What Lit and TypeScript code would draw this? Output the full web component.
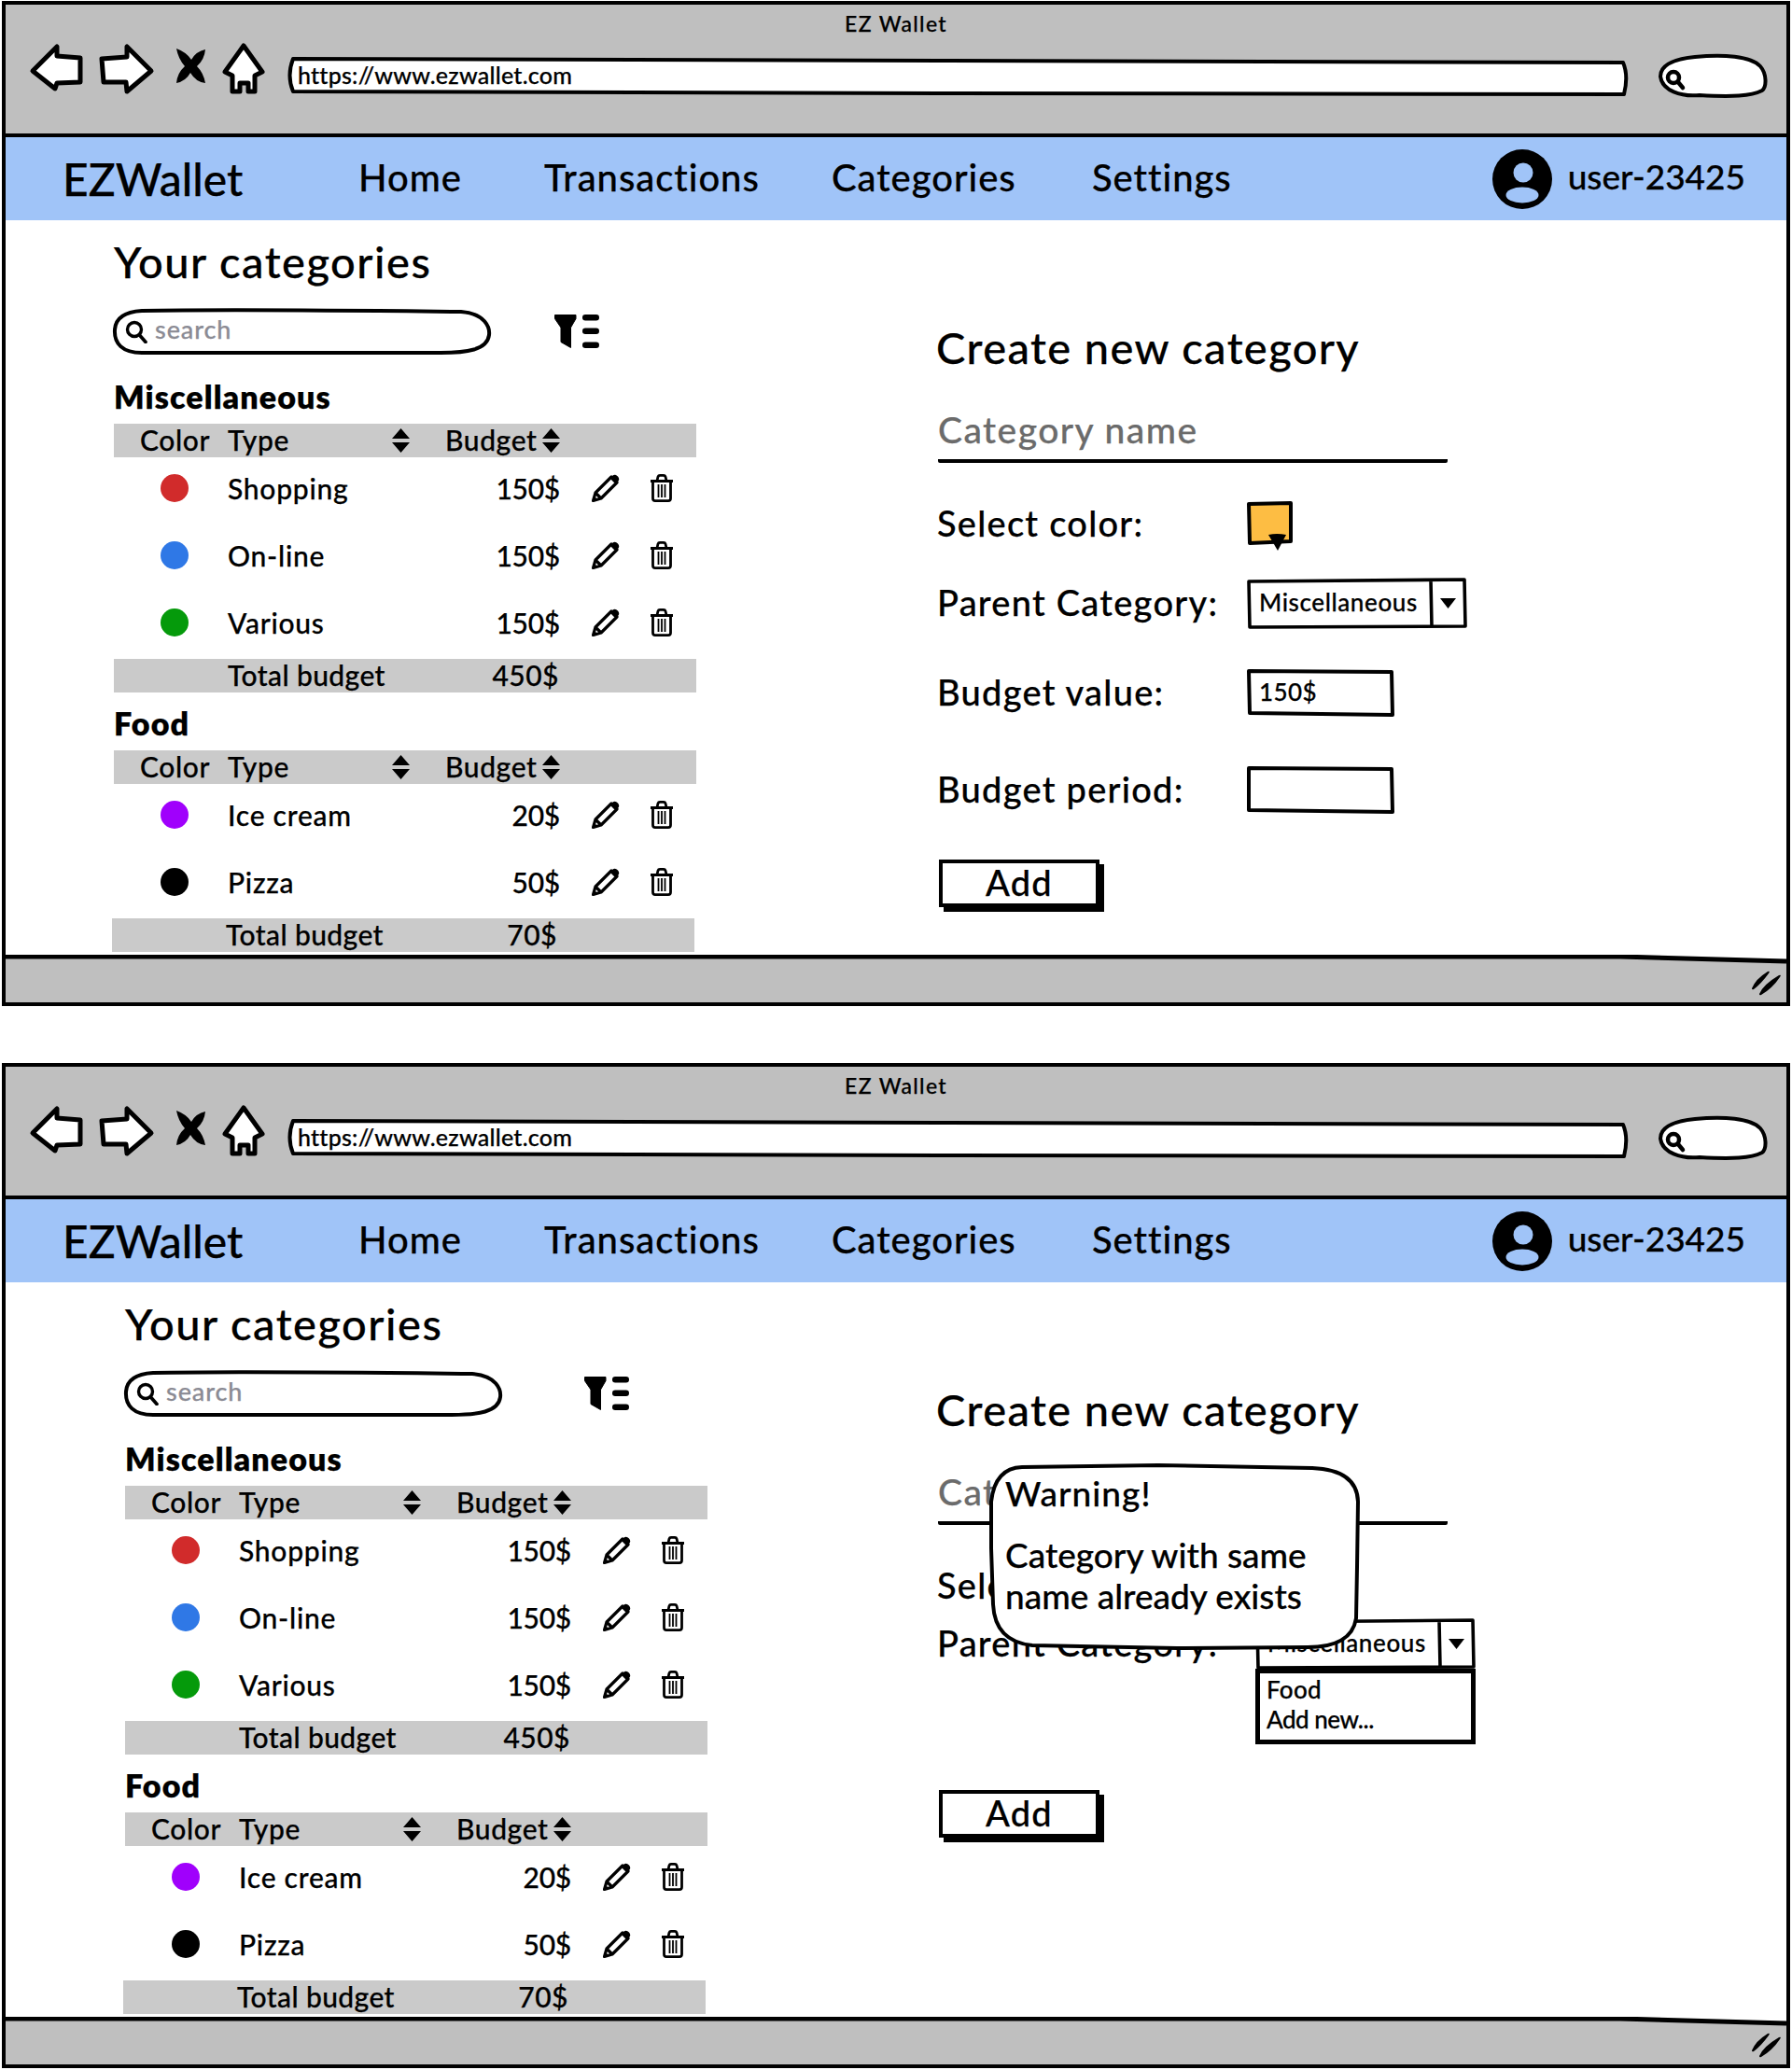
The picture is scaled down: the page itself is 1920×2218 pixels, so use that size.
import { LitElement, html, css } from 'lit';
import { customElement, property } from 'lit/decorators.js';

type Row = { color: string; type: string; budget: string };
type Group = { name: string; total: string; rows: Row[] };

const GROUPS: Group[] = [
  {
    name: 'Miscellaneous',
    total: '450$',
    rows: [
      { color: '#d12b2b', type: 'Shopping', budget: '150$' },
      { color: '#2f78e6', type: 'On-line', budget: '150$' },
      { color: '#059a0b', type: 'Various', budget: '150$' },
    ],
  },
  {
    name: 'Food',
    total: '70$',
    rows: [
      { color: '#a000fc', type: 'Ice cream', budget: '20$' },
      { color: '#000000', type: 'Pizza', budget: '50$' },
    ],
  },
];

const sortIcon = html`<svg class="sort" viewBox="0 0 19 26">
  <path d="M9.5 0 L19 11 H0 Z M0 15 H19 L9.5 26 Z" />
</svg>`;

const pencilIcon = html`<svg class="action" viewBox="0 0 30 30">
  <path d="M1.5 28.5 L4 20 L21 3 L27 9 L10 26 Z M4 20 L10 26" fill="none" stroke="#000" stroke-width="3.2" stroke-linejoin="round" />
  <path d="M19.5 4.5 L22 2 Q25 -0.5 28 2.5 Q30.5 5.5 28 8 L25.5 10.5 Z M0.5 29.5 L2.5 23.5 L6.5 27.5 Z" />
</svg>`;

const trashIcon = html`<svg class="action trash" viewBox="0 0 26 30">
  <path d="M1 7.5 H25 M8 7 L9 2.8 Q9.4 1.4 11 1.4 H15 Q16.6 1.4 17 2.8 L18 7 M3.5 8 V26 Q3.5 28.6 6 28.6 H20 Q22.5 28.6 22.5 26 V8" fill="none" stroke="#000" stroke-width="2.8" stroke-linejoin="round" />
  <path d="M9.5 11 V25 M13 11 V25 M16.5 11 V25" fill="none" stroke="#000" stroke-width="1.8" />
</svg>`;

@customElement('browser-window')
export class BrowserWindow extends LitElement {
  @property({ type: Boolean }) warning = false;

  static styles = css`
    :host {
      display: flex;
      flex-direction: column;
      width: 1916px;
      height: 1077px;
      box-sizing: border-box;
      border: 4px solid #000;
      background: #fff;
      font-family: 'Lato', 'Liberation Sans', sans-serif;
      font-weight: 500;
      color: #000;
      -webkit-text-stroke: 0.25px currentColor;
    }

    /* hand drawn outline, sits behind the control's own text */
    .control {
      position: relative;
      isolation: isolate;
      box-sizing: border-box;
    }

    .sketch {
      position: absolute;
      top: 0;
      left: 0;
      width: 100%;
      height: 100%;
      z-index: -1;
      overflow: visible;
    }

    .sketch .box {
      fill: #fff;
      stroke: #000;
      stroke-width: 4;
      stroke-linejoin: round;
    }

    .titlebar {
      height: 142px;
      box-sizing: border-box;
      flex: none;
      background: #bfbfbf;
      border-bottom: 4px solid #000;
    }

    .win-title {
      height: 39px;
      display: flex;
      align-items: center;
      justify-content: center;
      font-size: 23px;
      letter-spacing: 1.3px;
    }

    .toolbar {
      display: flex;
      align-items: flex-start;
      padding-left: 25px;
    }

    .tool {
      height: 64px;
      flex: none;
      display: block;
    }

    .tool path {
      fill: #fff;
      stroke: #000;
      stroke-width: 5;
      stroke-linejoin: round;
    }

    .tool path.solid {
      fill: #000;
      stroke: none;
    }

    .address {
      width: 1440px;
      height: 42px;
      margin-top: 17px;
      padding: 0 0 5px 13px;
      display: flex;
      align-items: center;
      font-size: 25px;
      letter-spacing: 0.25px;
      flex: none;
    }

    .mini-search {
      width: 119px;
      height: 49px;
      margin-left: 30px;
      margin-top: 13px;
      flex: none;
    }

    .mini-search .lens {
      fill: none;
      stroke: #000;
      stroke-width: 4.5;
      stroke-linecap: round;
    }

    .navbar {
      height: 89px;
      flex: none;
      background: #a0c4f8;
      display: grid;
      grid-template-columns: 317px 199px 308px 279px 1fr auto;
      align-items: center;
      padding: 0 44px 0 61px;
      box-sizing: border-box;
    }

    .brand {
      font-size: 48px;
    }

    .navlink {
      font-size: 40px;
      letter-spacing: 0.95px;
      margin-bottom: 3px;
    }

    .user {
      display: flex;
      align-items: center;
      gap: 17px;
      font-size: 37px;
    }

    .user span {
      margin-bottom: 6px;
    }

    .avatar {
      width: 64px;
      height: 64px;
      display: block;
    }

    .content {
      flex: 1;
      min-height: 0;
      display: grid;
      grid-template-columns: 998px 1fr;
    }

    .left {
      padding: 19px 0 0 116px;
    }

    .left.shifted {
      padding-left: 128px;
    }

    h1 {
      margin: 0;
      font-size: 47px;
      line-height: 50px;
      font-weight: 500;
      letter-spacing: 1.5px;
    }

    .search-row {
      display: flex;
      align-items: center;
      margin-top: 26px;
      padding-bottom: 13px;
      gap: 69px;
    }

    .shifted .search-row {
      gap: 89px;
    }

    .search {
      width: 403px;
      height: 48px;
      display: flex;
      align-items: center;
      padding: 0 0 6px 12px;
      gap: 8px;
      font-size: 27px;
      color: #8b8b94;
      letter-spacing: 0.9px;
    }

    .search .glyph {
      width: 24px;
      height: 25px;
      margin-top: 6px;
    }

    .filter {
      width: 48px;
      height: 36px;
    }

    .group {
      margin-top: 16px;
    }

    h2 {
      margin: 0 0 6px;
      font-size: 34px;
      line-height: 34px;
      height: 40px;
      font-weight: 800;
      letter-spacing: 1.1px;
    }

    .thead,
    .tfoot {
      width: 624px;
      height: 36px;
      box-sizing: border-box;
      padding-bottom: 3px;
      background: #cacaca;
      display: grid;
      align-items: center;
      font-size: 30px;
      line-height: 30px;
      letter-spacing: 0.4px;
    }

    .thead {
      grid-template-columns: 122px 176px 57px 104px 1fr;
      letter-spacing: 0.6px;
    }

    .thead .color {
      padding-left: 28px;
    }

    .sort {
      width: 19px;
      height: 26px;
      display: block;
      margin-top: 3px;
    }

    .rows {
      display: flex;
      flex-direction: column;
      gap: 6px;
      padding-bottom: 6px;
    }

    .row {
      height: 66px;
      width: 624px;
      display: grid;
      grid-template-columns: 122px 233px 123px 34px 62px 26px;
      align-items: center;
      font-size: 30px;
      letter-spacing: 0.75px;
    }

    .tfoot {
      grid-template-columns: 122px 233px 122px;
    }

    .tfoot.nudge {
      margin-left: -2px;
    }

    .num {
      text-align: right;
      letter-spacing: -0.25px;
    }

    .tfoot .num {
      letter-spacing: 0.5px;
    }

    .dot {
      width: 30px;
      height: 30px;
      border-radius: 50%;
      margin-left: 50px;
    }

    .action {
      width: 30px;
      height: 30px;
      display: block;
    }

    .action.trash {
      width: 26px;
    }

    .panel {
      position: relative;
      padding-top: 118px;
    }

    .panel-title {
      font-size: 47px;
      line-height: 37px;
      height: 40px;
      margin-left: -1px;
      letter-spacing: 1.37px;
    }

    .name {
      width: 546px;
      height: 56px;
      margin: 46px 0 0 1px;
      box-sizing: border-box;
      border-bottom: 4px solid #000;
      border-radius: 2px;
      font-size: 39px;
      line-height: 40px;
      color: #6b6b6b;
      letter-spacing: 1.45px;
    }

    .field {
      display: grid;
      grid-template-columns: 332px auto;
      justify-content: start;
      align-items: center;
      font-size: 38px;
      line-height: 40px;
      letter-spacing: 1.25px;
    }

    .field > span {
      margin-bottom: 3px;
    }

    .field.wide {
      grid-template-columns: 341px auto;
    }

    .f-color {
      margin-top: 42px;
    }

    .f-parent {
      margin-top: 36px;
    }

    .f-parent.tight {
      margin-top: 13px;
    }

    .f-value {
      margin-top: 44px;
    }

    .f-period {
      margin-top: 53px;
    }

    .swatch {
      width: 48px;
      height: 46px;
    }

    .select {
      width: 235px;
      height: 53px;
      padding: 0 0 3px 13px;
      display: flex;
      align-items: center;
      font-size: 26px;
      letter-spacing: 0.6px;
    }

    .textbox {
      width: 157px;
      height: 51px;
      padding: 0 0 3px 13px;
      display: flex;
      align-items: center;
      font-size: 26px;
      letter-spacing: 0.4px;
    }

    .options {
      grid-column: 2;
      width: 236px;
      height: 81px;
      box-sizing: border-box;
      border: 5px solid #000;
      background: #fff;
      padding: 1px 0 0 7px;
      font-size: 26px;
      line-height: 32px;
      letter-spacing: 0.3px;
    }

    .options .more {
      letter-spacing: -0.5px;
    }

    .add {
      width: 172px;
      height: 51px;
      box-sizing: border-box;
      margin: 49px 0 0 2px;
      padding-bottom: 3px;
      border: 4px solid #000;
      box-shadow: 5px 5px 0 #000;
      background: #fff;
      display: flex;
      align-items: center;
      justify-content: center;
      font-size: 38px;
      letter-spacing: 1.2px;
    }

    .warning {
      position: absolute;
      left: 54px;
      top: 195px;
      width: 399px;
      height: 198px;
      box-sizing: border-box;
      padding: 6px 0 0 19px;
      font-size: 37px;
    }

    .warning .head {
      line-height: 50px;
      margin-bottom: 19px;
      letter-spacing: 1.05px;
    }

    .warning .body {
      line-height: 44px;
    }

    .statusbar {
      position: relative;
      height: 51px;
      flex: none;
      background: #bfbfbf;
      display: flex;
      justify-content: flex-end;
      align-items: center;
    }

    .statusbar .edge {
      position: absolute;
      left: 0;
      top: 0;
      width: 100%;
      height: 12px;
    }

    .grip {
      width: 34px;
      height: 28px;
      margin: 8px 3px 0 0;
    }
  `;

  private renderGroup(group: Group, index: number) {
    return html`
      <div class="group">
        <h2>${group.name}</h2>
        <div class="thead">
          <span class="color">Color</span>
          <span>Type</span>
          ${sortIcon}
          <span>Budget</span>
          ${sortIcon}
        </div>
        <div class="rows">
          ${group.rows.map(
            (row) => html`
              <div class="row">
                <div class="dot" style="background:${row.color}"></div>
                <span>${row.type}</span>
                <span class="num">${row.budget}</span>
                <span></span>
                ${pencilIcon} ${trashIcon}
              </div>
            `
          )}
        </div>
        <div class="tfoot ${index === 1 ? 'nudge' : ''}">
          <span></span>
          <span>Total budget</span>
          <span class="num">${group.total}</span>
        </div>
      </div>
    `;
  }

  private renderTitlebar() {
    return html`
      <div class="titlebar">
        <div class="win-title">EZ Wallet</div>
        <div class="toolbar">
          <svg class="tool" style="width:74px" viewBox="30 44 74 64">
            <path d="M34 76 L60 50 L60 60 L85 62 L85 88 L60 89 L58 95 Z" />
          </svg>
          <svg class="tool" style="width:81px" viewBox="104 44 81 64">
            <path d="M161 76 L135 50 L135 61 L108 63 L110 88 L134 88 L135 98 Z" />
          </svg>
          <svg class="tool" style="width:51px" viewBox="185 44 51 64">
            <path class="solid" d="M188 52 Q199 56 204 64 Q209 55 219 53 Q218 64 210 71 Q217 78 219 89 Q209 88 203 78 Q198 87 188 89 Q189 78 197 71 Q190 63 188 52 Z" />
          </svg>
          <svg class="tool" style="width:69px" viewBox="236 44 69 64">
            <path d="M260 49 L280 77 L272 81 L272 98 L265 98 L265 89 L256 89 L256 98 L248 98 L248 81 L240 77 Z" />
          </svg>
          <div class="control address">
            <svg class="sketch" viewBox="0 0 1440 42">
              <path class="box" d="M8 2 L700 4 L1433 6 Q1439 20 1434 40 L700 39 L8 37 Q1 20 8 2 Z" />
            </svg>
            <span>https://www.ezwallet.com</span>
          </div>
          <div class="control mini-search">
            <svg class="sketch" viewBox="0 0 119 49">
              <path class="box" d="M3 25 C3 12 20 6 40 4 C70 1 100 3 110 14 C117 22 117 36 112 40 C100 46 80 47 45 45 C25 47 5 40 3 25 Z" />
              <circle class="lens" cx="17" cy="26" r="6" />
              <path class="lens" d="M22 31 L27 37" />
            </svg>
          </div>
        </div>
      </div>
    `;
  }

  private renderNavbar() {
    return html`
      <div class="navbar">
        <span class="brand">EZWallet</span>
        <span class="navlink">Home</span>
        <span class="navlink">Transactions</span>
        <span class="navlink">Categories</span>
        <span class="navlink">Settings</span>
        <div class="user">
          <svg class="avatar" viewBox="0 0 64 64">
            <circle cx="32" cy="32" r="32" fill="#000" />
            <circle cx="33" cy="25" r="10.5" fill="#a0c4f8" />
            <ellipse cx="32" cy="49" rx="17.5" ry="8.5" fill="#a0c4f8" />
          </svg>
          <span>user-23425</span>
        </div>
      </div>
    `;
  }

  private renderPanel() {
    const warn = this.warning;
    return html`
      <div class="panel">
        <div class="panel-title">Create new category</div>
        <div class="name">Category name</div>
        <div class="field f-color">
          <span>Select color:</span>
          <div class="control swatch">
            <svg class="sketch" viewBox="0 0 48 46">
              <path d="M2 2 L47 1 L47 42 L3 44 Z" fill="#fdbd43" stroke="#000" stroke-width="4" stroke-linejoin="round" />
              <path d="M23 35 Q32 33 42 35 L33 52 Z" fill="#000" />
            </svg>
          </div>
        </div>
        <div class="field f-parent ${warn ? 'wide tight' : ''}">
          <span>Parent Category:</span>
          <div class="control select">
            <svg class="sketch" viewBox="0 0 235 53">
              <path class="box" style="stroke-width:3.6" d="M2 3 L233 1 L234 51 L3 52 Z M197 2 L198 51" />
              <path d="M207 21 H224 L215.5 32 Z" fill="#000" />
            </svg>
            <span>Miscellaneous</span>
          </div>
          ${warn ? html`<div class="options">Food<br /><span class="more">Add new...</span></div>` : ''}
        </div>
        ${warn
          ? ''
          : html`
              <div class="field f-value">
                <span>Budget value:</span>
                <div class="control textbox">
                  <svg class="sketch" viewBox="0 0 157 51">
                    <path class="box" d="M2 2 L155 3 L156 49 L3 47 Z" />
                  </svg>
                  <span>150$</span>
                </div>
              </div>
              <div class="field f-period">
                <span>Budget period:</span>
                <div class="control textbox">
                  <svg class="sketch" viewBox="0 0 157 51">
                    <path class="box" d="M2 2 L155 3 L156 49 L2 47 Z" />
                  </svg>
                </div>
              </div>
            `}
        <div class="add">Add</div>
        ${warn
          ? html`
              <div class="control warning">
                <svg class="sketch" viewBox="0 0 399 198">
                  <path class="box" d="M37 3 L183 1 L348 4 Q396 6 397 40 L396 110 L395 165 Q390 196 343 196 L203 197 L48 194 Q8 190 6 150 L4 90 L4 40 Q8 4 37 3 Z" />
                </svg>
                <div class="head">Warning!</div>
                <div class="body">Category with same<br />name already exists</div>
              </div>
            `
          : ''}
      </div>
    `;
  }

  render() {
    return html`
      ${this.renderTitlebar()} ${this.renderNavbar()}
      <div class="content">
        <div class="left ${this.warning ? 'shifted' : ''}">
          <h1>Your categories</h1>
          <div class="search-row">
            <div class="control search">
              <svg class="sketch" viewBox="0 0 403 48">
                <path class="box" d="M30 2 C130 0 280 2 372 3 C398 5 403 20 402 28 C400 44 378 47 350 47 L30 47 C9 47 0 37 1 22 C2 9 13 3 30 2 Z" />
              </svg>
              <svg class="glyph" viewBox="0 0 24 25">
                <circle cx="10" cy="10" r="7.5" fill="none" stroke="#000" stroke-width="3.4" />
                <path d="M15.5 16 L22 23.5" stroke="#000" stroke-width="3.6" stroke-linecap="round" />
              </svg>
              <span>search</span>
            </div>
            <svg class="filter" viewBox="0 0 48 36">
              <path d="M0.5 0.5 H23 V4.5 L17.5 14 V35.5 L7 29.5 V14 L0.5 4.5 Z" stroke="#000" stroke-width="1" stroke-linejoin="round" />
              <rect x="30" y="0" width="18" height="6.5" rx="3.2" />
              <rect x="30" y="14.5" width="18" height="6.5" rx="3.2" />
              <rect x="30" y="29.5" width="18" height="6.5" rx="3.2" />
            </svg>
          </div>
          ${GROUPS.map((group, i) => this.renderGroup(group, i))}
        </div>
        ${this.renderPanel()}
      </div>
      <div class="statusbar">
        <svg class="edge" viewBox="0 0 1908 12" preserveAspectRatio="none">
          <path d="M1730 0 H1908 V6 Z" fill="#fff" />
          <path d="M0 2 H1730 L1908 7" fill="none" stroke="#000" stroke-width="5" />
        </svg>
        <svg class="grip" viewBox="0 0 34 28">
          <path d="M0 20 Q4 10 17 2 Q20 1 18 4 Q10 15 2 21 Q0 22 0 20 Z M8 26 Q12 16 29 6 Q32 5 30 8 Q22 20 10 27 Q8 28 8 26 Z" fill="#000" />
        </svg>
      </div>
    `;
  }
}

@customElement('app-root')
export class AppRoot extends LitElement {
  static styles = css`
    :host {
      display: flex;
      flex-direction: column;
      gap: 61px;
      padding: 1px 0 2px 2px;
      background: #fff;
    }
  `;

  render() {
    return html`
      <browser-window></browser-window>
      <browser-window warning></browser-window>
    `;
  }
}

declare global {
  interface HTMLElementTagNameMap {
    'app-root': AppRoot;
    'browser-window': BrowserWindow;
  }
}
